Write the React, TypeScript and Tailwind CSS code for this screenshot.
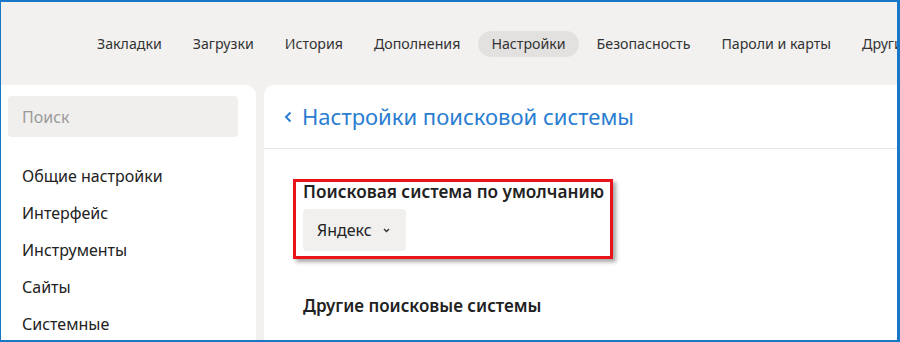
const tabs = [
  'Закладки',
  'Загрузки',
  'История',
  'Дополнения',
  'Настройки',
  'Безопасность',
  'Пароли и карты',
  'Другие',
];

const menu = ['Общие настройки', 'Интерфейс', 'Инструменты', 'Сайты', 'Системные'];

export default function App() {
  return (
    <div className="flex h-[342px] w-[900px] flex-col overflow-hidden border-t-2 border-r-[3px] border-b-2 border-l border-[#1778c8] bg-[#f2f1f0] font-['Noto_Sans',sans-serif] text-[#222]">
      {/* top tabs */}
      <nav className="flex h-[83px] shrink-0 items-center gap-[5px] whitespace-nowrap pl-[83px]">
        {tabs.map((tab) => (
          <span
            key={tab}
            className={
              tab === 'Настройки'
                ? 'flex h-[26px] items-center rounded-full bg-[#e2e1e0] px-[13px] text-[14.2px] text-[#333]'
                : 'flex h-[26px] items-center rounded-full px-[13px] text-[14.2px] text-[#333]'
            }
          >
            {tab}
          </span>
        ))}
      </nav>

      <div className="flex min-h-0 flex-1 gap-2">
        {/* sidebar */}
        <aside className="w-[255px] shrink-0 rounded-tr-[10px] bg-white pt-[11px] pl-[7px]">
          <div className="flex h-[41px] w-[230px] items-center rounded-[4px] bg-[#f0efee] pl-[14px] text-[16px] text-[#9a9a9a]">
            Поиск
          </div>
          <ul className="mt-[21px] pl-[14px]">
            {menu.map((item) => (
              <li key={item} className="h-[37px] text-[16px] leading-[37px]">
                {item}
              </li>
            ))}
          </ul>
        </aside>

        {/* main panel */}
        <main className="min-w-0 flex-1 rounded-tl-[10px] bg-white">
          <header className="flex h-[64px] items-center gap-[10px] border-b border-[#e4e4e4] pl-5">
            <svg width="8" height="12" viewBox="0 0 8 12" fill="none" aria-hidden>
              <path d="M6.5 1.5 2 6l4.5 4.5" stroke="#2a7dd1" strokeWidth="2" />
            </svg>
            <h1 className="text-[22px] text-[#2a7dd1]">Настройки поисковой системы</h1>
          </header>

          <div className="pl-[29px] pt-[30px]">
            <div className="w-[320px] border-[3px] border-[#e8141c] pb-[5px] pl-[7px] shadow-[3px_3px_4px_rgba(0,0,0,0.35)]">
              <div className="whitespace-nowrap text-[17.2px] font-semibold leading-[20px]">
                Поисковая система по умолчанию
              </div>
              <button
                type="button"
                className="mt-[7px] flex h-[42px] w-[103px] items-center rounded-[4px] bg-[#f1f0ef] pl-[14px] text-[16px]"
              >
                Яндекс
                <svg className="ml-[11px]" width="7" height="5" viewBox="0 0 7 5" fill="none" aria-hidden>
                  <path d="M1 1l2.5 2.5L6 1" stroke="#333" strokeWidth="1.4" />
                </svg>
              </button>
            </div>

            <div className="mt-[37px] pl-[10px] text-[17px] font-semibold leading-[20px]">
              Другие поисковые системы
            </div>
          </div>
        </main>
      </div>
    </div>
  );
}
